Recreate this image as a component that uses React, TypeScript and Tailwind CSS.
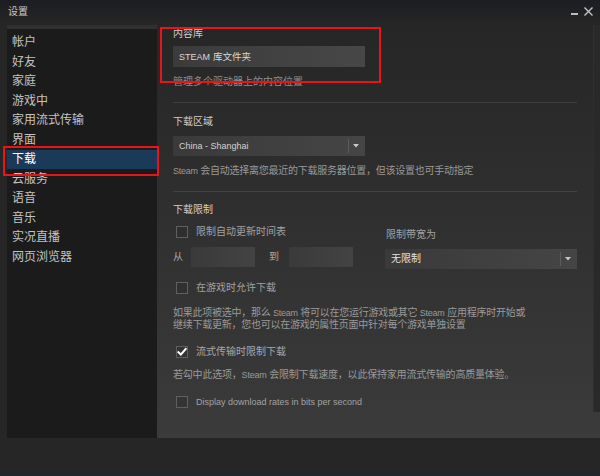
import React from "react";

const font = "font-['Liberation_Sans','Noto_Sans_CJK_SC',sans-serif]";

const Check = ({ checked }: { checked?: boolean }) => (
  <div className="w-[12px] h-[12px] border border-[#5f5f5f] flex items-center justify-center shrink-0 bg-[#2e2e2e]/40">
    {checked && (
      <svg width="11" height="10" viewBox="0 0 11 10">
        <path d="M1.5 5.2 L4.2 7.8 L9.6 1.6" stroke="#ffffff" strokeWidth="2.2" fill="none" strokeLinecap="square" />
      </svg>
    )}
  </div>
);

const Arrow = () => (
  <svg width="6" height="4" viewBox="0 0 6 4">
    <path d="M0 0 L6 0 L3 3.5 Z" fill="#c8c8c8" />
  </svg>
);

const Dropdown = ({ label, textColor, latin }: { label: string; textColor: string; latin?: boolean }) => (
  <div className="w-[192px] h-[20px] flex items-center bg-gradient-to-r from-[#3a3a3a] to-[#454545]">
    <span className={`flex-1 pl-[6px] ${latin ? "text-[9px]" : "text-[10px]"} leading-[12px] ${textColor}`}>{label}</span>
    <div className="w-px h-[14px] bg-[#5c5c5c]" />
    <div className="w-[16px] flex items-center pl-[4px]">
      <Arrow />
    </div>
  </div>
);

const Input = () => <div className="w-[64px] h-[20px] bg-gradient-to-r from-[#3a3a3a] to-[#434343]" />;

const S = () => <span className="text-[9px]">Steam</span>;

const navItems = ["帐户", "好友", "家庭", "游戏中", "家用流式传输", "界面", "下载", "云服务", "语音", "音乐", "实况直播", "网页浏览器"];

export default function App() {
  return (
    <div className={`relative w-[600px] h-[476px] bg-[#262626] overflow-hidden ${font}`}>
      {/* Title bar */}
      <div className="h-[25px] bg-gradient-to-b from-[#1b1d22] to-[#262626] flex items-start justify-between">
        <span className="pl-[8px] pt-[6px] text-[10px] leading-[12px] text-[#c8c8c8]">设置</span>
        <div className="flex items-start gap-[6px] pr-[7px] pt-[7px]">
          <div className="w-[7px] h-[2px] bg-[#bdbdbd] mt-[6px]" />
          <svg width="9" height="9" viewBox="0 0 9 9">
            <path d="M0.5 0.5 L8.5 8.5 M8.5 0.5 L0.5 8.5" stroke="#c4c4c4" strokeWidth="1.4" />
          </svg>
        </div>
      </div>

      {/* Body */}
      <div className="flex pl-[7px] h-[413px]">
        {/* Sidebar */}
        <div className="w-[150px] h-full flex flex-col bg-[#1b1b1b]">
          <div className="h-[4px] bg-[#303030]" />
          <div className="flex flex-col pt-[3.5px]">
            {navItems.map((n) => (
              <div
                key={n}
                className={`h-[19.5px] flex items-center pl-[5px] text-[12px] leading-[14px] ${
                  n === "下载" ? "bg-[#1b3958] text-white" : "text-[#c3c3c3]"
                }`}
              >
                {n}
              </div>
            ))}
          </div>
        </div>

        {/* Content */}
        <div className="relative flex-1 h-full bg-gradient-to-b from-[#262626] to-[#3b3b3b]">
          <div className="w-[404px] ml-[16px] flex flex-col pt-[2px]">
            <div className="h-[12px] text-[10px] leading-[12px] text-[#cfcfcf] mt-[1px]">内容库</div>
            <div className="mt-[6px] w-[192px] h-[21px] flex items-center pl-[6px] bg-gradient-to-r from-[#3b3b3b] to-[#474747] text-[9.5px] leading-[12px] text-[#d8d8d8]">
              <span className="text-[9px] mr-[3px]">STEAM</span>库文件夹
            </div>
            <div className="mt-[9px] h-[12px] text-[10px] leading-[12px] text-[#8e8e8e]">管理多个驱动器上的内容位置</div>
            <div className="mt-[14px] h-px bg-[#3f3f3f]" />

            <div className="mt-[13px] h-[12px] text-[10px] leading-[12px] text-[#cfcfcf]">下载区域</div>
            <div className="mt-[8px]">
              <Dropdown label="China - Shanghai" textColor="text-[#d2d2d2]" latin />
            </div>
            <div className="mt-[9px] h-[12px] text-[10px] leading-[12px] tracking-[-0.25px] text-[#999999]">
              <S /> 会自动选择离您最近的下载服务器位置，但该设置也可手动指定
            </div>
            <div className="mt-[14px] h-px bg-[#424242]" />

            <div className="mt-[12px] h-[12px] text-[10px] leading-[12px] text-[#cfcfcf]">下载限制</div>
            <div className="flex">
              <div className="w-[212px] flex flex-col">
                <div className="mt-[10px] h-[12px] flex items-center pl-[3px] gap-[8px]">
                  <Check />
                  <span className="text-[10px] leading-[12px] text-[#a2a2a2]">限制自动更新时间表</span>
                </div>
                <div className="mt-[9px] h-[20px] flex items-center">
                  <span className="w-[18px] text-[10px] leading-[12px] text-[#a8a8a8]">从</span>
                  <Input />
                  <span className="ml-[14px] w-[20px] text-[10px] leading-[12px] text-[#a8a8a8]">到</span>
                  <Input />
                </div>
              </div>
              <div className="flex flex-col">
                <div className="mt-[13px] h-[12px] text-[10px] leading-[12px] text-[#a2a2a2] pl-[1px]">限制带宽为</div>
                <div className="mt-[8px]">
                  <Dropdown label="无限制" textColor="text-[#e2e2e2]" />
                </div>
              </div>
            </div>

            <div className="mt-[13px] h-[12px] flex items-center pl-[3px] gap-[8px]">
              <Check />
              <span className="text-[10px] leading-[12px] text-[#a2a2a2]">在游戏时允许下载</span>
            </div>
            <div className="mt-[13px] text-[10px] leading-[11px] tracking-[-0.25px] text-[#9a9a9a]">
              <div>
                如果此项被选中，那么 <S /> 将可以在您运行游戏或其它 <S /> 应用程序时开始或
              </div>
              <div>继续下载更新，您也可以在游戏的属性页面中针对每个游戏单独设置</div>
            </div>

            <div className="mt-[16px] h-[12px] flex items-center pl-[3px] gap-[8px]">
              <Check checked />
              <span className="text-[10px] leading-[12px] text-[#a8a8a8]">流式传输时限制下载</span>
            </div>
            <div className="mt-[11px] h-[12px] text-[10px] leading-[12px] tracking-[-0.2px] text-[#9a9a9a]">
              若勾中此选项，<S /> 会限制下载速度，以此保持家用流式传输的高质量体验。
            </div>
            <div className="mt-[15px] h-[12px] flex items-center pl-[3px] gap-[8px]">
              <Check />
              <span className="text-[9px] leading-[12px] text-[#a2a2a2]">Display download rates in bits per second</span>
            </div>
          </div>

          {/* Scrollbar track */}
          <div className="absolute right-0 top-0 w-[7px] h-[387px] bg-[#292929] border-l border-[#2f2f2f]" />
        </div>
      </div>

      {/* Bottom edge */}
      <div className="absolute left-0 bottom-0 w-full h-[2px] bg-[#1d2833]" />

      {/* Red annotation boxes */}
      <div className="absolute left-[3px] top-[146px] w-[156px] h-[30px] border-2 border-[#e8131b]" />
      <div className="absolute left-[160px] top-[27px] w-[221px] h-[56px] border-2 border-[#e8131b]" />
    </div>
  );
}
